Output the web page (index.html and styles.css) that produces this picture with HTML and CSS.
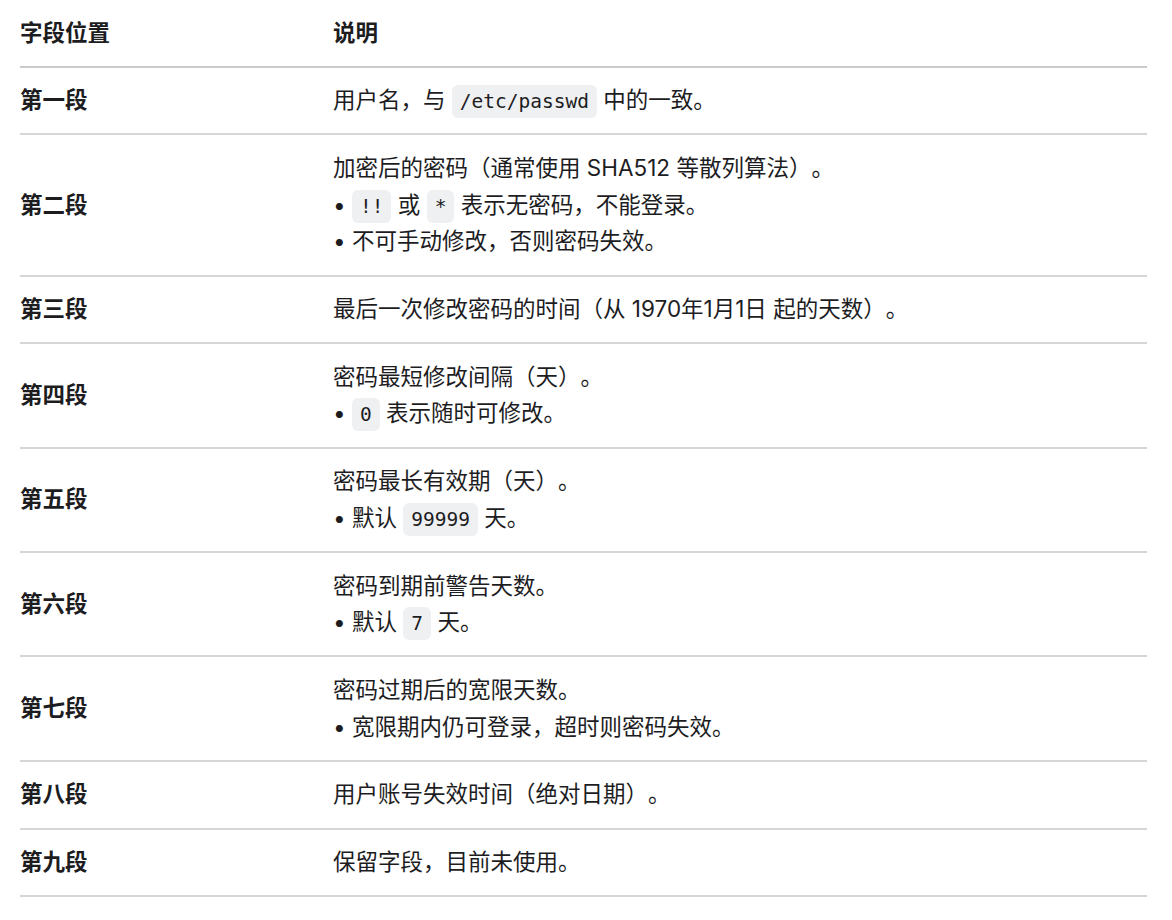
FILE: index.html
```html
<!DOCTYPE html>
<html lang="zh-CN">
<head>
<meta charset="utf-8">
<title>shadow 字段</title>
<link rel="stylesheet" href="styles.css">
</head>
<body>
<table class="fields">
  <thead>
    <tr><th class="c1">字段位置</th><th class="c2">说明</th></tr>
  </thead>
  <tbody>
    <tr><td class="c1">第一段</td><td class="c2">用户名，与 <code>/etc/passwd</code> 中的一致。</td></tr>
    <tr><td class="c1">第二段</td><td class="c2">加密后的密码（通常使用 SHA512 等散列算法）。<br>• <code>!!</code> 或 <code>*</code> 表示无密码，不能登录。<br>• 不可手动修改，否则密码失效。</td></tr>
    <tr><td class="c1">第三段</td><td class="c2">最后一次修改密码的时间（从 1970年1月1日 起的天数）。</td></tr>
    <tr><td class="c1">第四段</td><td class="c2">密码最短修改间隔（天）。<br>• <code>0</code> 表示随时可修改。</td></tr>
    <tr><td class="c1">第五段</td><td class="c2">密码最长有效期（天）。<br>• 默认 <code>99999</code> 天。</td></tr>
    <tr><td class="c1">第六段</td><td class="c2">密码到期前警告天数。<br>• 默认 <code>7</code> 天。</td></tr>
    <tr><td class="c1">第七段</td><td class="c2">密码过期后的宽限天数。<br>• 宽限期内仍可登录，超时则密码失效。</td></tr>
    <tr><td class="c1">第八段</td><td class="c2">用户账号失效时间（绝对日期）。</td></tr>
    <tr><td class="c1">第九段</td><td class="c2">保留字段，目前未使用。</td></tr>
  </tbody>
</table>
</body>
</html>
```
FILE: styles.css
```css
html, body {
  margin: 0;
  padding: 0;
  background: #ffffff;
}
body {
  font-family: Inter, "Noto Sans CJK SC", sans-serif;
  font-size: 22.5px;
  line-height: 36.7px;
  color: #1d1d1f;
  text-spacing-trim: space-all;
}
.fields {
  margin-left: 20px;
  width: 1127px;
  border-collapse: collapse;
}
.fields th,
.fields td {
  text-align: left;
  vertical-align: middle;
  padding: 14.5px 0;
  border-bottom: 2px solid #d6d6d6;
}
.fields thead th {
  font-weight: 600;
  border-bottom-color: #cacaca;
}
.fields .c1 {
  width: 313px;
}
.fields td.c1 {
  font-weight: 700;
}
.fields td.c2 {
  font-weight: 400;
}
code {
  font-family: "DejaVu Sans Mono", monospace;
  font-size: 19.5px;
  line-height: 1;
  background: #eff0f2;
  border-radius: 6px;
  padding: 5px 8px;
}
```
